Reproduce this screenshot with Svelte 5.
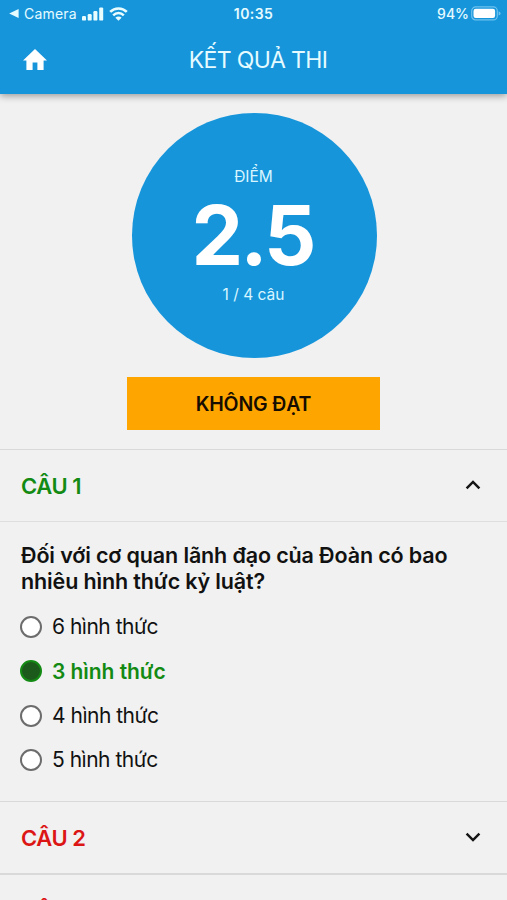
<script>
  const options = [
    { text: '6 hình thức', chosen: false },
    { text: '3 hình thức', chosen: true },
    { text: '4 hình thức', chosen: false },
    { text: '5 hình thức', chosen: false }
  ];
</script>

{#snippet chevron(up)}
  <svg class="chevron" class:up width="16" height="10" viewBox="0 0 16 10" aria-hidden="true">
    <path d="M1.6 1.7 8 8.1l6.4-6.4" fill="none" stroke="#151515" stroke-width="2.5" />
  </svg>
{/snippet}

<div class="screen">
  <header>
    <div class="status">
      <div class="left">
        <svg width="10" height="9" viewBox="0 0 10 9"><path d="M9.6 0v9L.2 4.5z" fill="#e4fbff" /></svg>
        <span class="camera">Camera</span>
        <svg class="signal" width="22" height="14" viewBox="0 0 22 14" fill="#e9fdff">
          <rect x="0" y="9" width="4" height="4.6" rx="1.2" />
          <rect x="5.7" y="7" width="4" height="6.6" rx="1.2" />
          <rect x="11.4" y="4" width="4" height="9.6" rx="1.2" />
          <rect x="17.2" y="0.4" width="4" height="13.2" rx="1.2" />
        </svg>
        <svg class="wifi" width="19" height="14" viewBox="0 0 19 14" fill="none" stroke="#e9fdff">
          <path d="M1.2 4.9a11.8 11.8 0 0 1 16.6 0" stroke-width="2.7" />
          <path d="M4.2 8.3a7.5 7.5 0 0 1 10.6 0" stroke-width="2.5" />
          <path d="M9.5 13.7 6.4 10.7a4.3 4.3 0 0 1 6.2 0z" fill="#e9fdff" stroke="none" />
        </svg>
      </div>
      <span class="time">10:35</span>
      <div class="right">
        <span>94%</span>
        <svg width="30" height="15" viewBox="0 0 30 15">
          <rect x=".7" y=".9" width="25.6" height="13" rx="4" fill="none" stroke="#6fc2ee" stroke-width="1.2" />
          <rect x="2.5" y="2.8" width="21.6" height="9.2" rx="2.2" fill="#fff" />
          <path d="M27.6 5.2q2 .8 2 2.2t-2 2.2z" fill="#6fc2ee" />
        </svg>
      </div>
    </div>
    <div class="bar">
      <svg class="home" width="24" height="21" viewBox="0 0 24 21"><path d="M12 0 0 11.4h3.4V21h6.2v-7.6h4.8V21h6.2v-9.6H24z" fill="#fff" /></svg>
      <h1>KẾT QUẢ THI</h1>
    </div>
  </header>

  <section class="result">
    <div class="circle">
      <span class="label">ĐIỂM</span>
      <strong>2.5</strong>
      <span class="count">1 / 4 câu</span>
    </div>
    <div class="verdict"><span>KHÔNG ĐẠT</span></div>
  </section>

  <section class="question">
    <div class="head right-answer"><h2>CÂU 1</h2>{@render chevron(true)}</div>
    <div class="body">
      <p>Đối với cơ quan lãnh đạo của Đoàn có bao<br />nhiêu hình thức kỷ luật?</p>
      <ul>
        {#each options as option}
          <li class:chosen={option.chosen}><i></i><span>{option.text}</span></li>
        {/each}
      </ul>
    </div>
  </section>
  <section class="question">
    <div class="head wrong"><h2>CÂU 2</h2>{@render chevron(false)}</div>
  </section>
  <section class="question last">
    <div class="head wrong"><h2>CÂU 3</h2>{@render chevron(false)}</div>
  </section>
</div>

<style>
  :global(body) { margin: 0; background: #f1f1f1; }
  .screen {
    width: 507px;
    height: 900px;
    overflow: hidden;
    background: #f1f1f1;
    color: #111;
    font-family: Inter, "Noto Sans", sans-serif;
    white-space: nowrap;
  }
  h1, h2, p, ul { margin: 0; padding: 0; }
  svg { display: block; flex: none; }
  header {
    height: 94px;
    background: #1695db;
    color: #e6fbff;
    box-shadow: 0 2px 7px rgba(0, 0, 0, 0.36);
  }
  .status {
    display: grid;
    grid-template-columns: 1fr auto 1fr;
    align-items: center;
    height: 27px;
    padding: 0 8px;
    font-size: 14px;
    line-height: 27px;
  }
  .left, .right { display: flex; align-items: center; }
  .left { padding-left: 1px; }
  .camera { margin-left: 5px; width: 53px; letter-spacing: 0.2px; }
  .signal { margin-left: 5px; }
  .wifi { margin-left: 5px; }
  .time { font-weight: 600; letter-spacing: 0.4px; }
  .right { justify-content: flex-end; gap: 2px; margin-right: -2px; }
  .right span { font-weight: 500; }
  .bar {
    display: grid;
    grid-template-columns: 100px 1fr 100px;
    align-items: center;
    height: 65px;
  }
  .home { margin-left: 23px; }
  h1 {
    padding-left: 9px;
    text-align: center;
    font-size: 23px;
    line-height: 28px;
    font-weight: 400;
    letter-spacing: -0.6px;
  }
  .result {
    display: flex;
    flex-direction: column;
    align-items: center;
    height: 355px;
    box-sizing: border-box;
    padding-top: 19px;
  }
  .circle {
    display: flex;
    flex-direction: column;
    align-items: center;
    width: 245px;
    height: 245px;
    box-sizing: border-box;
    padding-top: 54px;
    margin-left: 1px;
    border-radius: 50%;
    background: #1695db;
    color: #d9f5ff;
    font-size: 15.5px;
    line-height: 20px;
  }
  .circle span { margin-right: 1px; }
  .circle strong {
    color: #fff;
    font-size: 82px;
    line-height: 98px;
    font-weight: 700;
    letter-spacing: -3px;
    margin-right: 3px;
  }
  .verdict {
    display: flex;
    align-items: center;
    justify-content: center;
    width: 253px;
    height: 53px;
    margin-top: 19px;
    background: #ffa500;
    font-size: 19.5px;
    font-weight: 600;
    color: #160d00;
    letter-spacing: -0.15px;
  }
  .question { border-top: 1px solid #d9d9d9; }
  .question.last { border-top-width: 2px; }
  .head {
    display: flex;
    align-items: center;
    justify-content: space-between;
    height: 71px;
    padding: 0 26px 0 21px;
  }
  .head h2 { font-size: 22px; line-height: 28px; font-weight: 600; letter-spacing: -0.4px; }
  .right-answer { color: #138a13; }
  .wrong { color: #dc1515; }
  .chevron { margin-bottom: 2px; }
  .chevron.up { transform: rotate(180deg); }
  .body { border-top: 1px solid #dedede; height: 280px; padding: 20px 20px 0; box-sizing: border-box; }
  .body p { padding-left: 1px; font-size: 21.5px; line-height: 26px; font-weight: 600; letter-spacing: -0.13px; }
  ul { list-style: none; margin-top: 10.6px; }
  li { display: flex; align-items: center; height: 44.4px; font-size: 21px; letter-spacing: -0.5px; }
  li i {
    width: 22px;
    height: 22px;
    box-sizing: border-box;
    border: 2px solid #6c6c6c;
    border-radius: 50%;
    background: #fff;
  }
  li span { margin-left: 10px; }
  li.chosen { color: #138a13; font-weight: 600; letter-spacing: -0.05px; }
  li.chosen i { background: #1c5a1c; border-color: #138a13; }
</style>
